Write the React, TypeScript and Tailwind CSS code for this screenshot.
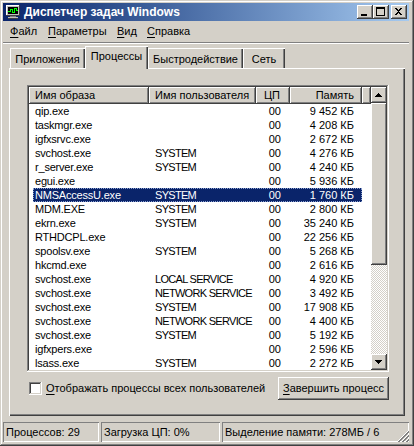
import type { ReactNode } from 'react'

const raised =
  'shadow-[inset_-1px_-1px_#404040,inset_1px_1px_#fff,inset_-2px_-2px_#808080,inset_2px_2px_#d4d0c8]'
const sunken =
  'shadow-[inset_-1px_-1px_#fff,inset_1px_1px_#808080,inset_-2px_-2px_#d4d0c8,inset_2px_2px_#404040]'
const headerCell = 'shadow-[inset_-1px_-1px_#404040,inset_1px_1px_#fff,inset_-2px_-2px_#808080]'

interface Proc {
  readonly name: string
  readonly user: string
  readonly mem: string
}

const processes: Proc[] = [
  { name: 'qip.exe', user: '', mem: '9 452 КБ' },
  { name: 'taskmgr.exe', user: '', mem: '4 208 КБ' },
  { name: 'igfxsrvc.exe', user: '', mem: '2 672 КБ' },
  { name: 'svchost.exe', user: 'SYSTEM', mem: '4 276 КБ' },
  { name: 'r_server.exe', user: 'SYSTEM', mem: '4 240 КБ' },
  { name: 'egui.exe', user: '', mem: '5 936 КБ' },
  { name: 'NMSAccessU.exe', user: 'SYSTEM', mem: '1 760 КБ' },
  { name: 'MDM.EXE', user: 'SYSTEM', mem: '2 800 КБ' },
  { name: 'ekrn.exe', user: 'SYSTEM', mem: '35 240 КБ' },
  { name: 'RTHDCPL.exe', user: '', mem: '22 256 КБ' },
  { name: 'spoolsv.exe', user: 'SYSTEM', mem: '5 268 КБ' },
  { name: 'hkcmd.exe', user: '', mem: '2 616 КБ' },
  { name: 'svchost.exe', user: 'LOCAL SERVICE', mem: '4 920 КБ' },
  { name: 'svchost.exe', user: 'NETWORK SERVICE', mem: '3 492 КБ' },
  { name: 'svchost.exe', user: 'SYSTEM', mem: '17 908 КБ' },
  { name: 'svchost.exe', user: 'NETWORK SERVICE', mem: '4 400 КБ' },
  { name: 'svchost.exe', user: 'SYSTEM', mem: '5 192 КБ' },
  { name: 'igfxpers.exe', user: '', mem: '2 596 КБ' },
  { name: 'lsass.exe', user: 'SYSTEM', mem: '2 272 КБ' },
]

const SELECTED = 6

function Acc({ children }: { children: ReactNode }) {
  return <span className="underline underline-offset-[2px]">{children}</span>
}

function AppIcon() {
  return (
    <svg width="16" height="16" viewBox="0 0 16 16" shapeRendering="crispEdges">
      <rect x="1" y="1" width="14" height="11" fill="#c0c0c0" />
      <rect x="1" y="1" width="14" height="1" fill="#fff" />
      <rect x="1" y="1" width="1" height="11" fill="#fff" />
      <rect x="14" y="1" width="1" height="11" fill="#404040" />
      <rect x="1" y="11" width="14" height="1" fill="#404040" />
      <rect x="3" y="3" width="10" height="7" fill="#000" />
      <path d="M3 7h2v-2h2v3h2v-4h2v2h2" stroke="#00ff00" fill="none" />
      <rect x="5" y="12" width="6" height="1" fill="#808080" />
      <rect x="3" y="13" width="10" height="2" fill="#c0c0c0" />
      <rect x="3" y="14" width="10" height="1" fill="#404040" />
    </svg>
  )
}

function CaptionButton({ kind }: { kind: 'min' | 'max' | 'close' }) {
  return (
    <div className={`w-[16px] h-[14px] bg-[#d4d0c8] ${raised} ${kind === 'close' ? 'ml-[2px]' : ''}`}>
      <svg width="16" height="14" viewBox="0 0 16 14" shapeRendering="crispEdges">
        {kind === 'min' && <rect x="4" y="9" width="6" height="2" fill="#000" />}
        {kind === 'max' && (
          <g fill="#000">
            <rect x="3" y="2" width="9" height="2" />
            <rect x="3" y="2" width="1" height="9" />
            <rect x="11" y="2" width="1" height="9" />
            <rect x="3" y="10" width="9" height="1" />
          </g>
        )}
        {kind === 'close' && (
          <path
            d="M4 3h2v1h1v1h1v-1h1v-1h2v1h-1v1h-1v1h-1v1h1v1h1v1h1v1h-2v-1h-1v-1h-1v1h-1v1h-2v-1h1v-1h1v-1h1v-1h-1v-1h-1v-1h-1z"
            fill="#000"
          />
        )}
      </svg>
    </div>
  )
}

function ArrowButton({ dir }: { dir: 'up' | 'down' }) {
  return (
    <div className={`w-[16px] h-[16px] bg-[#d4d0c8] shrink-0 ${raised}`}>
      <svg width="16" height="16" viewBox="0 0 16 16" shapeRendering="crispEdges">
        {dir === 'up' ? (
          <g fill="#000">
            <rect x="7" y="6" width="1" height="1" />
            <rect x="6" y="7" width="3" height="1" />
            <rect x="5" y="8" width="5" height="1" />
            <rect x="4" y="9" width="7" height="1" />
          </g>
        ) : (
          <g fill="#000">
            <rect x="4" y="6" width="7" height="1" />
            <rect x="5" y="7" width="5" height="1" />
            <rect x="6" y="8" width="3" height="1" />
            <rect x="7" y="9" width="1" height="1" />
          </g>
        )}
      </svg>
    </div>
  )
}

function Tab({ label, width, selected }: { label: string; width: string; selected?: boolean }) {
  return (
    <div
      className={`${width} bg-[#d4d0c8] flex justify-center shadow-[inset_1px_1px_#fff,inset_-1px_0_#404040,inset_-2px_0_#808080] ${
        selected ? 'relative z-10 h-[23px] -mb-px pt-[4px]' : 'h-[20px] pt-[5px]'
      }`}
    >
      <span className="leading-[13px]">{label}</span>
    </div>
  )
}

function SizeGrip() {
  return (
    <svg width="12" height="12" viewBox="0 0 12 12" className="absolute right-0 bottom-0" shapeRendering="crispEdges">
      {[0, 4, 8].map((o) => (
        <g key={o}>
          {Array.from({ length: 11 - o }).map((_, i) => (
            <g key={i}>
              <rect x={11 - i} y={o + i} width="1" height="1" fill="#fff" />
              <rect x={11 - i} y={o + i + 1} width="1" height="2" fill="#808080" />
            </g>
          ))}
        </g>
      ))}
    </svg>
  )
}

export default function App() {
  return (
    <div
      className="w-[414px] h-[446px] bg-[#d4d0c8] text-black text-[11px] leading-none font-['Liberation_Sans',Arial,sans-serif] flex flex-col pt-[3px] pl-[3px] pr-[5px] pb-[4px] overflow-hidden shadow-[inset_-1px_-1px_#404040,inset_1px_1px_#d4d0c8,inset_-2px_-2px_#808080,inset_2px_2px_#fff]"
    >
      {/* title bar */}
      <div className="h-[18px] shrink-0 flex items-center bg-linear-to-r from-[#0a246a] to-[#a6caf0] px-[2px]">
        <AppIcon />
        <span className="ml-[3px] text-white font-bold text-[12px]">Диспетчер задач Windows</span>
        <div className="ml-auto flex">
          <CaptionButton kind="min" />
          <CaptionButton kind="max" />
          <CaptionButton kind="close" />
        </div>
      </div>

      {/* menu */}
      <div className="h-[21px] shrink-0 flex items-center pl-[7px]">
        <span className="w-[38px]">
          <Acc>Ф</Acc>айл
        </span>
        <span className="w-[69px]">
          <Acc>П</Acc>араметры
        </span>
        <span className="w-[30px]">
          <Acc>В</Acc>ид
        </span>
        <span>
          <Acc>С</Acc>правка
        </span>
      </div>
      <div className="h-px shrink-0 bg-[#808080]" />
      <div className="h-px shrink-0 bg-white" />

      {/* tabs */}
      <div className="h-[24px] shrink-0 flex items-end pl-[7px]">
        <Tab label="Приложения" width="w-[75px]" />
        <Tab label="Процессы" width="w-[63px]" selected />
        <Tab label="Быстродействие" width="w-[95px]" />
        <Tab label="Сеть" width="w-[42px]" />
      </div>

      {/* tab panel */}
      <div className="ml-[6px] w-[396px] h-[348px] shrink-0 flex flex-col pt-[17px] pl-[18px] shadow-[inset_1px_1px_#fff,inset_-1px_-1px_#404040,inset_-2px_-2px_#808080]">
        <div className={`w-[362px] h-[287px] p-[2px] bg-white ${sunken}`}>
          <div className="flex h-full">
            <div className="w-[342px] flex flex-col">
              <div className="h-[17px] flex bg-[#d4d0c8] shrink-0">
                <div className={`w-[120px] pl-[6px] flex items-center ${headerCell}`}>Имя образа</div>
                <div className={`w-[107px] pl-[6px] flex items-center ${headerCell}`}>Имя пользователя</div>
                <div className={`w-[34px] pr-[10px] flex items-center justify-end ${headerCell}`}>ЦП</div>
                <div className={`w-[72px] pr-[8px] flex items-center justify-end ${headerCell}`}>Память</div>
                <div className={`flex-1 ${headerCell}`} />
              </div>
              {processes.map((p, i) => (
                <div
                  key={i}
                  className={`ml-[4px] w-[329px] h-[14px] flex items-center whitespace-nowrap ${
                    i === SELECTED ? 'bg-[#0a246a] text-white outline-1 outline-dotted -outline-offset-1 outline-[#8aa0d0]' : ''
                  }`}
                >
                  <div className="w-[116px] pl-[2px] tracking-[-0.2px]">{p.name}</div>
                  <div className="w-[107px] pl-[6px] tracking-[-0.7px] overflow-hidden">{p.user}</div>
                  <div className="w-[34px] pr-[9px] text-right">00</div>
                  <div className="w-[72px] pr-[8px] text-right">{p.mem}</div>
                </div>
              ))}
            </div>
            <div className="w-[16px] flex flex-col">
              <ArrowButton dir="up" />
              <div className={`h-[162px] shrink-0 bg-[#d4d0c8] ${raised}`} />
              <div className="flex-1 bg-[image:repeating-conic-gradient(#fff_0_25%,#d4d0c8_0_50%)] bg-[length:2px_2px]" />
              <ArrowButton dir="down" />
            </div>
          </div>
        </div>

        <div className="mt-[5px] w-[362px] h-[23px] flex items-center">
          <div className={`ml-[2px] w-[13px] h-[13px] bg-white ${sunken}`} />
          <span className="ml-[4px]">
            <Acc>О</Acc>тображать процессы всех пользователей
          </span>
          <div className={`ml-auto w-[111px] h-[23px] flex items-center justify-center ${raised}`}>
            <span>
              <Acc>З</Acc>авершить процесс
            </span>
          </div>
        </div>
      </div>

      {/* status bar */}
      <div className="mt-auto h-[20px] flex gap-[2px] whitespace-nowrap">
        <div className="w-[96px] pl-[3px] flex items-center shadow-[inset_1px_1px_#808080,inset_-1px_-1px_#fff]">
          Процессов: 29
        </div>
        <div className="w-[119px] pl-[3px] flex items-center shadow-[inset_1px_1px_#808080,inset_-1px_-1px_#fff]">
          Загрузка ЦП: 0%
        </div>
        <div className="relative flex-1 pl-[3px] flex items-center overflow-hidden shadow-[inset_1px_1px_#808080,inset_-1px_-1px_#fff]">
          Выделение памяти: 278МБ / 6
          <SizeGrip />
        </div>
      </div>
    </div>
  )
}
